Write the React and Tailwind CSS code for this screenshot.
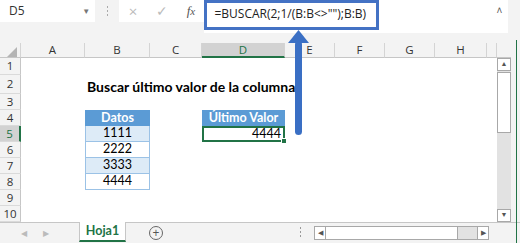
import React from 'react';

const cols = [
  { name: '', w: 21 },
  { name: 'A', w: 64 },
  { name: 'B', w: 65 },
  { name: 'C', w: 52 },
  { name: 'D', w: 83 },
  { name: 'E', w: 50 },
  { name: 'F', w: 50 },
  { name: 'G', w: 50 },
  { name: 'H', w: 52 },
  { name: '', w: 10 },
];

const rowHeights = [17, 19, 16, 16, 16, 16, 16, 16, 16, 16];

const cellFont = { fontFamily: 'Lato, "Liberation Sans", sans-serif' };

function Cell({ row, col }) {
  // col index: 1=A,2=B,...
  if (row === 2 && col === 2) {
    return (
      <div className="relative h-full">
        <span className="absolute left-[2px] top-[1px] whitespace-nowrap text-[14px] font-bold text-black">
          Buscar último valor de la columna
        </span>
      </div>
    );
  }
  if (col === 2 && row >= 4 && row <= 8) {
    if (row === 4) {
      return (
        <div className="flex h-full items-center justify-center bg-[#5b9bd5] text-[12.5px] font-bold text-white">
          Datos
        </div>
      );
    }
    const vals = { 5: '1111', 6: '2222', 7: '3333', 8: '4444' };
    const shade = row % 2 === 1 ? 'bg-[#ddebf7]' : 'bg-white';
    return (
      <div className={`flex h-full items-center justify-center border-x border-b border-[#9bc2e6] text-[12.5px] text-black ${shade}`}>
        {vals[row]}
      </div>
    );
  }
  if (col === 4 && row === 4) {
    return (
      <div className="flex h-full items-center justify-center bg-[#5b9bd5] text-[12.5px] font-bold text-white">
        Último Valor
      </div>
    );
  }
  if (col === 4 && row === 5) {
    return (
      <div className="relative flex h-full items-center justify-end border-2 border-[#217346] pr-[2px] text-[12.5px] text-black">
        4444
        <span className="absolute -bottom-[4px] -right-[4px] h-[6px] w-[6px] border border-white bg-[#217346]" />
      </div>
    );
  }
  return <div className="h-full" />;
}

export default function App() {
  return (
    <div
      className="relative h-[243px] w-[520px] overflow-hidden bg-[#f3f3f3]"
      style={{ fontFamily: '"Open Sans", "Liberation Sans", sans-serif' }}
    >
      {/* formula bar */}
      <div className="flex h-[33px] items-start">
        <div className="flex h-[22px] w-[97px] items-center justify-between bg-white pl-[9px] pr-[5px] text-[12px] text-[#333]">
          <span>D5</span>
          <span className="text-[8px] text-[#777]">▼</span>
        </div>
        <div className="flex h-[22px] w-[25px] items-center justify-center">
          <div className="flex flex-col gap-[2px]">
            <span className="h-[2px] w-[1px] bg-[#aaa]" />
            <span className="h-[2px] w-[1px] bg-[#aaa]" />
            <span className="h-[2px] w-[1px] bg-[#aaa]" />
          </div>
        </div>
        <div className="flex h-[22px] w-[87px] items-center justify-around bg-white text-[#bbb]">
          <span className="text-[15px] leading-none">×</span>
          <span className="text-[14px] leading-none">✓</span>
          <span className="text-[13px] italic text-[#555]" style={{ fontFamily: '"Liberation Serif", serif' }}>
            f<span className="text-[11px]">x</span>
          </span>
        </div>
        <div className="relative flex h-[33px] w-[299px] items-start bg-white">
          <div className="flex h-[30px] w-[175px] items-start border-[3px] border-[#4472c4] pl-[7px] pt-[2px] text-[12px] text-[#222]">
            =BUSCAR(2;1/(B:B&lt;&gt;"");B:B)
          </div>
        </div>
        <div className="flex h-[33px] flex-1 items-start justify-end bg-white pr-[6px] pt-[3px] text-[10px] text-[#555]">
          ˄
        </div>
        <div className="h-[33px] w-[12px]" />
      </div>

      <div className="h-[10px]" />

      {/* sheet */}
      <div className="flex">
        <div>
          {/* column header */}
          <div className="flex h-[15px]">
            {cols.map((c, i) => {
              const active = c.name === 'D';
              return (
                <div
                  key={i}
                  style={{ width: c.w }}
                  className={`flex items-center justify-center border-r border-[#d4d4d4] text-[11.5px] ${
                    active
                      ? 'border-b-2 border-b-[#217346] bg-[#d2d2d2] text-[#217346]'
                      : 'border-b border-b-[#c6c6c6] bg-[#f3f3f3] text-[#333]'
                  }`}
                >
                  {i === 0 ? (
                    <span className="ml-[4px] mt-[3px] h-0 w-0 border-b-[10px] border-l-[10px] border-b-[#b4b4b4] border-l-transparent" />
                  ) : (
                    c.name
                  )}
                </div>
              );
            })}
          </div>
          {rowHeights.map((h, r) => {
            const row = r + 1;
            return (
              <div key={row} className="flex" style={{ height: h }}>
                {cols.map((c, i) => {
                  if (i === 0) {
                    const active = row === 5;
                    return (
                      <div
                        key={i}
                        style={{ width: c.w }}
                        className={`flex items-center justify-center border-b border-b-[#dadada] text-[11.5px] ${
                          active
                            ? 'border-r-2 border-r-[#217346] bg-[#d2d2d2] text-[#217346]'
                            : 'border-r border-r-[#c6c6c6] bg-[#f3f3f3] text-[#333]'
                        }`}
                      >
                        {row}
                      </div>
                    );
                  }
                  return (
                    <div key={i} style={{ width: c.w, ...cellFont }} className="bg-white">
                      <Cell row={row} col={i} />
                    </div>
                  );
                })}
              </div>
            );
          })}
        </div>

        {/* vertical scrollbar */}
        <div className="flex w-[23px] flex-col">
          <div className="h-[15px] w-[14px] border-b border-[#c6c6c6] bg-[#f3f3f3]" />
          <div className="flex h-[164px] w-[14px] flex-col bg-[#e2e2e2]">
            <div className="flex h-[13px] items-center justify-center border border-[#a8a8a8] bg-white text-[7px] text-[#555]">
              ▲
            </div>
            <div className="mt-[1px] h-[61px] border border-[#a8a8a8] bg-white" />
            <div className="flex-1" />
            <div className="flex h-[13px] items-center justify-center border border-[#a8a8a8] bg-white text-[7px] text-[#555]">
              ▼
            </div>
          </div>
        </div>
      </div>

      {/* sheet tabs */}
      <div className="flex h-[21px] items-start border-t border-[#c6c6c6]">
        <div className="flex w-[79px] items-center gap-[16px] pl-[21px] pt-[4px] text-[8px] text-[#bbb]">
          <span>◀</span>
          <span>▶</span>
        </div>
        <div
          className="-mt-[1px] flex h-[20px] w-[47px] items-center justify-center border-x border-b-2 border-[#c6c6c6] border-b-[#217346] bg-white text-[12.5px] font-bold text-[#217346]"
          style={cellFont}
        >
          Hoja1
        </div>
        <div className="ml-[23px] mt-[3px] flex h-[14px] w-[14px] items-center justify-center rounded-full border border-[#666] text-[12px] leading-none text-[#555]">
          +
        </div>
        <div className="ml-[137px] mt-[4px] flex flex-col gap-[2px]">
          <span className="h-[2px] w-[1px] bg-[#999]" />
          <span className="h-[2px] w-[1px] bg-[#999]" />
          <span className="h-[2px] w-[1px] bg-[#999]" />
        </div>
        <div className="ml-[13px] mt-[3px] flex h-[14px] w-[175px] border border-[#a8a8a8] bg-[#e2e2e2]">
          <div className="flex w-[11px] items-center justify-center border-r border-[#a8a8a8] bg-white text-[7px] text-[#555]">◀</div>
          <div className="w-[132px] border-r border-[#a8a8a8] bg-white" />
          <div className="flex-1" />
          <div className="flex w-[11px] items-center justify-center border-l border-[#a8a8a8] bg-white text-[7px] text-[#555]">▶</div>
        </div>
      </div>

      {/* right edge */}
      <div className="absolute right-[3px] top-[40px] h-[203px] w-[1px] bg-[#217346]" />

      {/* annotation arrow */}
      <svg className="absolute left-[286px] top-[29px]" width="24" height="108" viewBox="0 0 24 108">
        <rect x="9" y="12" width="7" height="94" rx="3.5" fill="#3a6fc4" />
        <polygon points="12.5,1 2,14 23,14" fill="#3a6fc4" />
      </svg>
    </div>
  );
}
